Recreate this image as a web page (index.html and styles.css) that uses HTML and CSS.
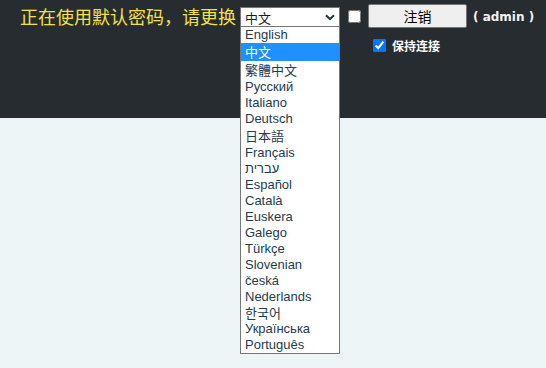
FILE: index.html
```html
<!DOCTYPE html>
<html lang="zh">
<head>
<meta charset="utf-8">
<title>Login</title>
<link rel="stylesheet" href="styles.css">
</head>
<body>
<div class="header">
  <div class="warn">正在使用默认密码，请更换</div>
  <div class="select-wrap">
    <div class="select-box">
      <span class="select-value">中文</span>
      <svg class="chev" width="10" height="7" viewBox="0 0 10 7"><path d="M1 1.2 L5 5 L9 1.2" fill="none" stroke="#243641" stroke-width="2"/></svg>
    </div>
    <ul class="options">
      <li>English</li>
      <li class="cjk sel">中文</li>
      <li class="cjk">繁體中文</li>
      <li>Русский</li>
      <li>Italiano</li>
      <li>Deutsch</li>
      <li class="cjk jp">日本語</li>
      <li>Français</li>
      <li>עברית</li>
      <li>Español</li>
      <li>Català</li>
      <li>Euskera</li>
      <li>Galego</li>
      <li>Türkçe</li>
      <li>Slovenian</li>
      <li>česká</li>
      <li>Nederlands</li>
      <li class="kr">한국어</li>
      <li>Українська</li>
      <li>Português</li>
    </ul>
  </div>
  <input class="box" type="checkbox">
  <div class="btn-col">
    <button class="logout">注销</button>
    <label class="keep"><input class="box" type="checkbox" checked><span>保持连接</span></label>
  </div>
  <div class="user">( admin )</div>
</div>
<div class="main"></div>
</body>
</html>
```
FILE: styles.css
```css
html, body {
  margin: 0;
  padding: 0;
  background: #edf5f7;
  font-family: "Liberation Sans", "Noto Sans CJK SC", sans-serif;
}
body { min-height: 100vh; }
.header {
  position: relative;
  z-index: 2;
  height: 118px;
  background: #272c30;
  display: flex;
  align-items: flex-start;
  padding: 4px 0 0 20px;
  box-sizing: border-box;
}
.main {
  height: 250px;
  position: relative;
  z-index: 1;
}
.warn {
  color: #f5e04a;
  font-size: 18px;
  line-height: 24px;
  font-family: "Noto Sans CJK TC", sans-serif;
  white-space: nowrap;
}
.select-wrap {
  position: relative;
  margin: 3px 0 0 4px;
  width: 100px;
}
.select-box {
  height: 20px;
  width: 100px;
  box-sizing: border-box;
  border: 1px solid #767676;
  background: #fff;
  display: flex;
  align-items: center;
  justify-content: space-between;
  padding: 0 4px 0 4px;
}
.select-value {
  font-size: 13px;
  color: #1b1b1b;
  font-family: "Noto Sans CJK SC", sans-serif;
}
.chev { display: block; }
.options {
  position: absolute;
  left: 0;
  top: 19px;
  width: 100px;
  box-sizing: border-box;
  margin: 0;
  padding: 0;
  list-style: none;
  background: #fff;
  border: 1px solid #767676;
  z-index: 5;
}
.options li {
  height: 16px;
  line-height: 16px;
  padding-left: 4px;
  font-size: 13px;
  color: #1d3c4c;
  white-space: nowrap;
}
.options li.cjk {
  height: 18px;
  line-height: 18px;
  font-family: "Noto Sans CJK TC", sans-serif;
}
.options li.jp { font-family: "Noto Sans CJK JP", sans-serif; }
.options li.kr { font-family: "Noto Sans CJK KR", sans-serif; }
.options li.sel {
  background: #1e90ff;
  color: #fff;
  font-family: "Noto Sans CJK SC", sans-serif;
}
.box {
  width: 13px;
  height: 13px;
  margin: 6px 0 0 8px;
  accent-color: #0075ff;
}
.btn-col {
  display: flex;
  flex-direction: column;
  margin-left: 7px;
}
.logout {
  width: 99px;
  height: 24px;
  margin: 0;
  padding: 0;
  border: 1px solid #767676;
  border-radius: 2px;
  background: #efefef;
  font-size: 14px;
  color: #000;
  font-family: "Noto Sans CJK SC", sans-serif;
}
.keep {
  display: flex;
  align-items: center;
  margin: 9px 0 0 5px;
  color: #fff;
  font-weight: bold;
  font-size: 12px;
  font-family: "Noto Sans CJK SC", sans-serif;
}
.keep .box { margin: 0 6px 0 0; }
.user {
  margin-left: 6px;
  color: #f2f2f2;
  font-weight: bold;
  font-size: 12px;
  line-height: 26px;
  font-family: "DejaVu Sans", sans-serif;
  white-space: pre;
}
```
